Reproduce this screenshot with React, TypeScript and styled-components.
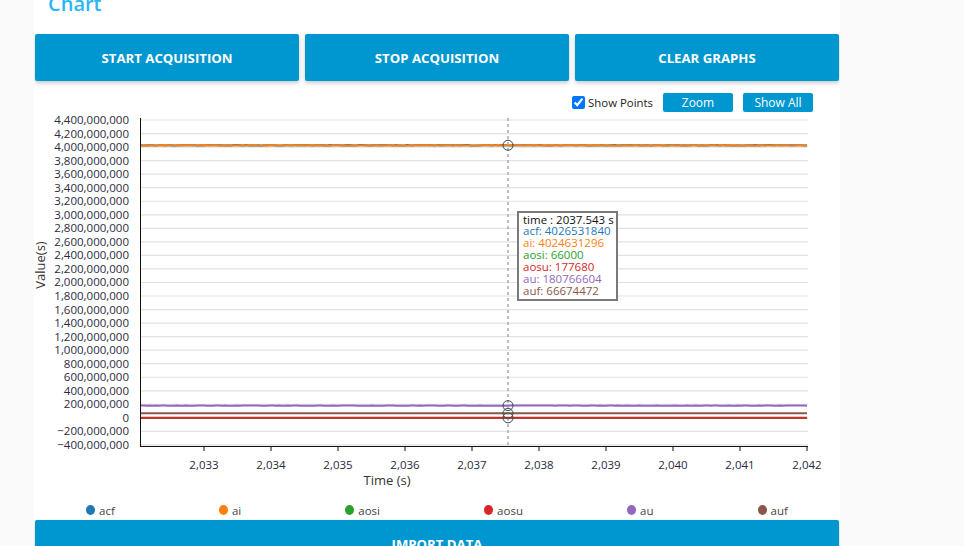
import React from "react";
import styled, { createGlobalStyle } from "styled-components";

const Global = createGlobalStyle`
  html, body { margin: 0; padding: 0; background: #fafafa; overflow: hidden; }
  body { font-family: "Open Sans", "Noto Sans", sans-serif; }
`;

const Panel = styled.div`
  width: 806px;
  margin-left: 34px;
  background: #ffffff;
  height: 546px;
  overflow: hidden;
  display: flex;
  flex-direction: column;
  & > * { flex-shrink: 0; }
`;

const Title = styled.h2`
  margin: -8px 0 18px 14px;
  font-size: 20px;
  line-height: 24px;
  font-weight: 600;
  color: #29b6f6;
`;

const ButtonRow = styled.div`
  display: grid;
  grid-template-columns: repeat(3, 1fr);
  gap: 6px;
  padding: 0 1px;
`;

const BigButton = styled.button<{ $tall?: number }>`
  height: ${(p) => p.$tall ?? 47}px;
  border: none;
  border-radius: 2px;
  background: #0096cf;
  color: #ffffff;
  font-family: "Open Sans", sans-serif;
  font-weight: 700;
  font-size: 13.2px;
  text-transform: uppercase;
  box-shadow: 0 2px 4px rgba(0, 0, 0, 0.22);
  cursor: pointer;
`;

const Toolbar = styled.div`
  display: flex;
  justify-content: flex-end;
  align-items: center;
  gap: 10px;
  margin-top: 12px;
  padding-right: 27px;
  height: 19px;
`;

const CheckLabel = styled.label`
  display: flex;
  align-items: center;
  gap: 3px;
  font-size: 11.4px;
  color: #222;
  input { margin: 0; width: 13px; height: 13px; }
`;

const SmallButton = styled.button`
  width: 70px;
  height: 19px;
  border: none;
  border-radius: 2px;
  background: #0096cf;
  color: #fff;
  font-family: "Open Sans", sans-serif;
  font-size: 12px;
  padding: 0;
`;

const ChartSvg = styled.svg`
  display: block;
  width: 806px;
  height: 388px;
  font-family: "Open Sans", sans-serif;
`;

const Legend = styled.div`
  display: flex;
  justify-content: space-around;
  height: 14px;
  margin-top: 3px;
`;

const LegendItem = styled.div`
  display: flex;
  align-items: center;
  gap: 4px;
  font-size: 11.5px;
  color: #444;
`;

const Dot = styled.span<{ $c: string }>`
  width: 9px;
  height: 10px;
  border-radius: 50%;
  background: ${(p) => p.$c};
`;

const ImportWrap = styled.div`
  margin-top: 3px;
  padding: 0 1px;
  display: flex;
  flex-direction: column;
`;

const colors = {
  acf: "#1f77b4",
  ai: "#ff7f0e",
  aosi: "#2ca02c",
  aosu: "#d62728",
  au: "#9467bd",
  auf: "#8c564b",
};

const OX = 34;
const OY = 112;
const yOf = (v: number) => 120 + ((4.4e9 - v) / 0.2e9) * 13.54;
const xOf = (t: number) => 204 + (t - 2033) * 67;

function noisy(v: number, amp: number, seed: number) {
  const pts: string[] = [];
  let s = seed;
  for (let x = 141; x <= 808; x += 3) {
    s = (s * 9301 + 49297) % 233280;
    const r = s / 233280 - 0.5;
    pts.push(`${x},${(yOf(v) + r * amp).toFixed(2)}`);
  }
  return pts.join(" ");
}

const fmt = (n: number) => (n < 0 ? "\u2212" : "") + Math.abs(n).toLocaleString("en-US");

export default function App() {
  const labels: number[] = [];
  for (let i = 0; i <= 24; i++) labels.push(4.4e9 - i * 0.2e9);
  const ticks = [2033, 2034, 2035, 2036, 2037, 2038, 2039, 2040, 2041, 2042];
  const cx = 508;
  const tip = [
    ["time : 2037.543 s", "#111"],
    ["acf: 4026531840", colors.acf],
    ["ai: 4024631296", colors.ai],
    ["aosi: 66000", colors.aosi],
    ["aosu: 177680", colors.aosu],
    ["au: 180766604", colors.au],
    ["auf: 66674472", colors.auf],
  ];
  return (
    <>
      <Global />
      <Panel>
        <Title>Chart</Title>
        <ButtonRow>
          <BigButton>Start Acquisition</BigButton>
          <BigButton>Stop Acquisition</BigButton>
          <BigButton>Clear Graphs</BigButton>
        </ButtonRow>
        <Toolbar>
          <CheckLabel>
            <input type="checkbox" defaultChecked />
            Show Points
          </CheckLabel>
          <SmallButton>Zoom</SmallButton>
          <SmallButton>Show All</SmallButton>
        </Toolbar>
        <ChartSvg viewBox="0 0 806 388">
          <g transform={`translate(${-OX},${-OY})`}>
            {labels.map((v) => (
              <g key={v}>
                <line x1={141} x2={808} y1={yOf(v)} y2={yOf(v)} stroke="#e2e2e2" strokeWidth={1.2} />
                <text x={129} y={yOf(v) + 4} textAnchor="end" fontSize={11.5} fill="#2a2a40">
                  {fmt(v)}
                </text>
              </g>
            ))}
            <line x1={140.5} x2={140.5} y1={118} y2={446.5} stroke="#111" strokeWidth={1} />
            <line x1={140} x2={808} y1={446.5} y2={446.5} stroke="#111" strokeWidth={1} />
            {ticks.map((t) => (
              <g key={t}>
                <line x1={xOf(t)} x2={xOf(t)} y1={446} y2={451} stroke="#111" />
                <text x={xOf(t)} y={469} textAnchor="middle" fontSize={11.5} fill="#2a2a40">
                  {fmt(t)}
                </text>
              </g>
            ))}
            <text x={387} y={485} textAnchor="middle" fontSize={13} fill="#333">
              Time (s)
            </text>
            <text
              transform="translate(45,265) rotate(-90)"
              textAnchor="middle"
              fontSize={13}
              fill="#333"
            >
              Value(s)
            </text>
            <polyline points={noisy(66674472, 0, 1)} fill="none" stroke={colors.auf} strokeWidth={2} />
            <polyline points={noisy(180766604, 0.4, 3)} fill="none" stroke={colors.au} strokeWidth={2} />
            <polyline points={noisy(66000, 0, 5)} fill="none" stroke={colors.aosi} strokeWidth={2} />
            <polyline points={noisy(177680, 0, 7)} fill="none" stroke={colors.aosu} strokeWidth={2} />
            <polyline points={noisy(4026531840, 0.4, 11)} fill="none" stroke={colors.acf} strokeWidth={2} />
            <polyline points={noisy(4024631296, 0.7, 13)} fill="none" stroke={colors.ai} strokeWidth={2} />
            <line x1={cx} x2={cx} y1={118} y2={446} stroke="#aaa" strokeWidth={1.5} strokeDasharray="3,3" />
            {[yOf(4026531840), yOf(180766604), yOf(66674472), yOf(177680)].map((y, i) => (
              <circle key={i} cx={cx} cy={y} r={5} fill="none" stroke="#3a4a4a" strokeWidth={1} />
            ))}
            <rect x={518} y={212} width={99} height={88} fill="#fff" stroke="#7a7a7a" strokeWidth={2} />
            {tip.map(([s, c], i) => (
              <text key={s} x={523} y={223.5 + i * 11.9} fontSize={11.5} fill={c}>
                {s}
              </text>
            ))}
          </g>
        </ChartSvg>
        <Legend>
          {Object.entries(colors).map(([k, c]) => (
            <LegendItem key={k}>
              <Dot $c={c} />
              {k}
            </LegendItem>
          ))}
        </Legend>
        <ImportWrap>
          <BigButton $tall={47}>Import Data</BigButton>
        </ImportWrap>
      </Panel>
    </>
  );
}
